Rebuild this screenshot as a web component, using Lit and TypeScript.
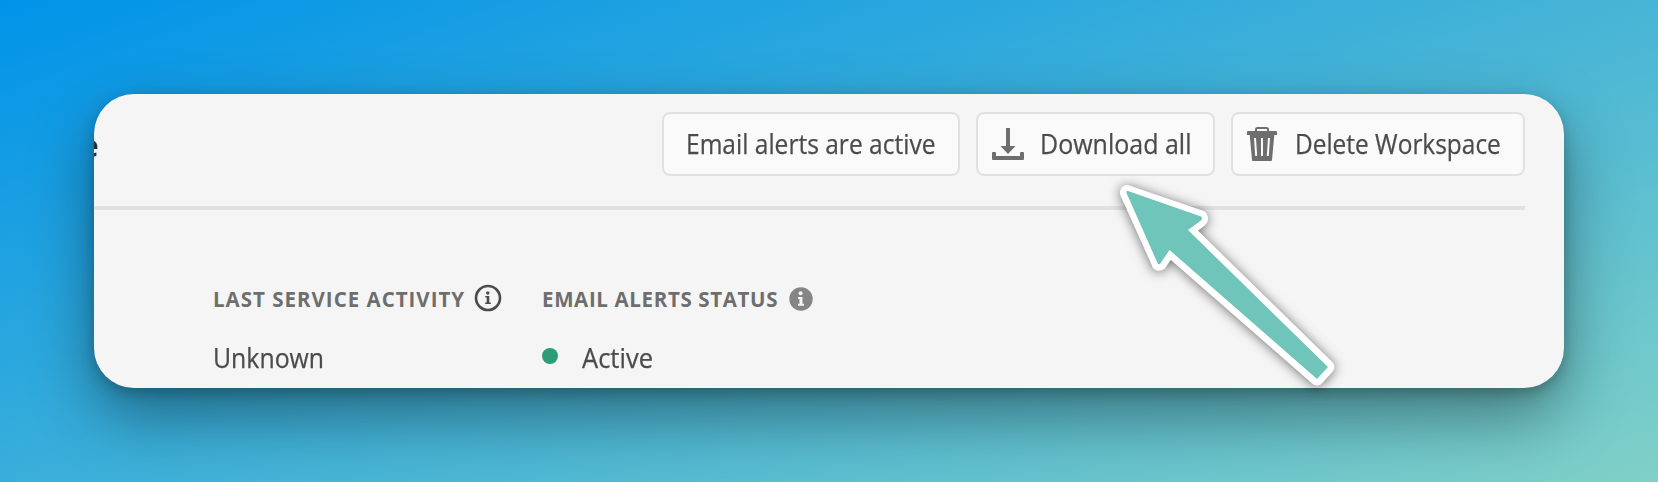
import { LitElement, html, css } from "lit";
import { customElement } from "lit/decorators.js";

@customElement("app-root")
export class AppRoot extends LitElement {
  static styles = css`
    :host {
      display: block;
      box-sizing: border-box;
      width: 1658px;
      height: 482px;
      padding: 94px;
      overflow: hidden;
      position: relative;
      background: linear-gradient(160deg, #0093e9 0%, #80d0c7 100%);
      font-family: "Open Sans", "Noto Sans", sans-serif;
      color: #4b4b4b;
    }
    .card {
      width: 1470px;
      height: 294px;
      border-radius: 40px;
      overflow: hidden;
      background: #f5f5f5;
      box-shadow: 0 28px 64px rgba(0, 0, 0, 0.4), 0 5px 14px rgba(0, 0, 0, 0.22);
    }
    .header {
      box-sizing: border-box;
      height: 116px;
      width: 1431px;
      padding-top: 18px;
      border-bottom: 4px solid #e1e1e1;
      border-radius: 0 0 2px 0;
      display: flex;
      align-items: flex-start;
      justify-content: space-between;
    }
    .title {
      width: 4.500px;
      display: flex;
      justify-content: flex-end;
      font-weight: 700;
      font-size: 31px;
      line-height: 66px;
      color: #2c2c2c;
    }
    .actions { display: flex; gap: 16px; }
    .btn {
      box-sizing: border-box;
      height: 64px;
      border: 2px solid #e1e1e1;
      border-radius: 8px;
      background: #fafafa;
      display: flex;
      align-items: center;
      font-size: 27px;
      line-height: 60px;
      white-space: nowrap;
    }
    .btn span, .value span {
      transform-origin: 0 50%;
      -webkit-text-stroke: 0.250px #4b4b4b;
    }
    .email { width: 298px; padding-left: 22px; }
    .email span { transform: scaleX(0.909); }
    .download { width: 239px; padding-left: 14px; }
    .download span { transform: scaleX(0.926); }
    .delete { width: 294px; padding-left: 14px; }
    .delete span { transform: scaleX(0.905); }
    .btn svg { flex: none; }
    .download svg { margin-right: 16px; }
    .delete svg { margin-right: 18px; }
    .stats { display: flex; padding: 72px 0 0 119px; }
    .stat { width: 329px; }
    .label {
      display: flex;
      align-items: center;
      height: 34px;
      font-size: 20.500px;
      font-weight: 700;
      color: #6e6e6e;
      white-space: nowrap;
    }
    .label svg { flex: none; }
    .activity span { width: 261px; letter-spacing: 1px; }
    .activity svg { margin-top: -2px; }
    .status span { width: 247px; letter-spacing: 0.650px; }
    .value {
      display: flex;
      align-items: center;
      height: 40px;
      margin-top: 21px;
      font-size: 27px;
      white-space: nowrap;
    }
    .value span { transform: scaleX(0.920); }
    .value .wide { transform: scaleX(0.945); }
    .dot {
      width: 16px;
      height: 16px;
      border-radius: 50%;
      background: #2d9d78;
      margin: 0 24px 2px 0;
    }
    .arrow { position: absolute; left: 1100px; top: 170px; overflow: visible;
      filter: drop-shadow(0 1px 6px rgba(0, 0, 0, 0.55)); }
  `;

  render() {
    return html`
      <div class="card">
        <div class="header">
          <div class="title">e</div>
          <div class="actions">
            <div class="btn email"><span>Email alerts are active</span></div>
            <div class="btn download">
              <svg width="32" height="36" viewBox="0 0 32 36" fill="#6e6e6e">
                <path d="M14 2h4v18h5.500L16 28 8.500 20H14z" />
                <path d="M1 26h2a1 1 0 0 1 1 1v3h24v-3a1 1 0 0 1 1-1h2a1 1 0 0 1 1 1v6a1 1 0 0 1-1 1H1a1 1 0 0 1-1-1v-6a1 1 0 0 1 1-1z" />
              </svg>
              <span>Download all</span>
            </div>
            <div class="btn delete">
              <svg width="30" height="34" viewBox="0 0 30 34" fill="#6e6e6e">
                <path d="M9 4V2.500Q9 1 10.500 1h9Q21 1 21 2.500V4" fill="none" stroke="#6e6e6e" stroke-width="2" />
                <path d="M1 4h28a1 1 0 0 1 1 1v3h-2.700L25 33a1 1 0 0 1-1 1H6a1 1 0 0 1-1-1L2.700 8H0V5a1 1 0 0 1 1-1z" />
                <path d="M8 11l1.200 18M15 11v18M22 11l-1.200 18" stroke="#fafafa" stroke-width="2" />
              </svg>
              <span>Delete Workspace</span>
            </div>
          </div>
        </div>
        <div class="stats">
          <div class="stat">
            <div class="label activity">
              <span>LAST SERVICE ACTIVITY</span>
              <svg width="28" height="28" viewBox="0 0 28 28" fill="#4b4b4b">
                <circle cx="14" cy="14" r="12" fill="none" stroke="#4b4b4b" stroke-width="2.600" />
                <circle cx="13.800" cy="9" r="1.700" />
                <path d="M11.300 12h4v6.400h1.500V20h-5.600v-1.600h1.500v-4.800h-1.400z" />
              </svg>
            </div>
            <div class="value"><span>Unknown</span></div>
          </div>
          <div class="stat">
            <div class="label status">
              <span>EMAIL ALERTS STATUS</span>
              <svg width="24" height="24" viewBox="0 0 24 24">
                <circle cx="12" cy="12" r="11.700" fill="#858585" />
                <circle cx="11.600" cy="6.300" r="2" fill="#f5f5f5" />
                <path d="M9 10h4.500v6.700h1.500v2H9v-2h1.500v-4.700H9z" fill="#f5f5f5" />
              </svg>
            </div>
            <div class="value"><div class="dot"></div><span class="wide">Active</span></div>
          </div>
        </div>
      </div>
      <svg class="arrow" width="260" height="230" viewBox="0 0 260 230" stroke-linejoin="round">
        <path d="M28 22L101 47Q102 49 101 50L88 60 228 197 217 209 69.500 80 60 94Q58 95 58 93L26.500 23Q26.500 21 28 22z" fill="#fff" stroke="#fff" stroke-width="13" />
        <path d="M28 21L101 46.500Q103 48.500 101 50.500L88 60 228 197 217 209 69.500 80 60 94Q58.500 95 57.500 93L26.500 23Q26 20.500 28 21z" fill="#6fc5b9" />
      </svg>
    `;
  }
}
